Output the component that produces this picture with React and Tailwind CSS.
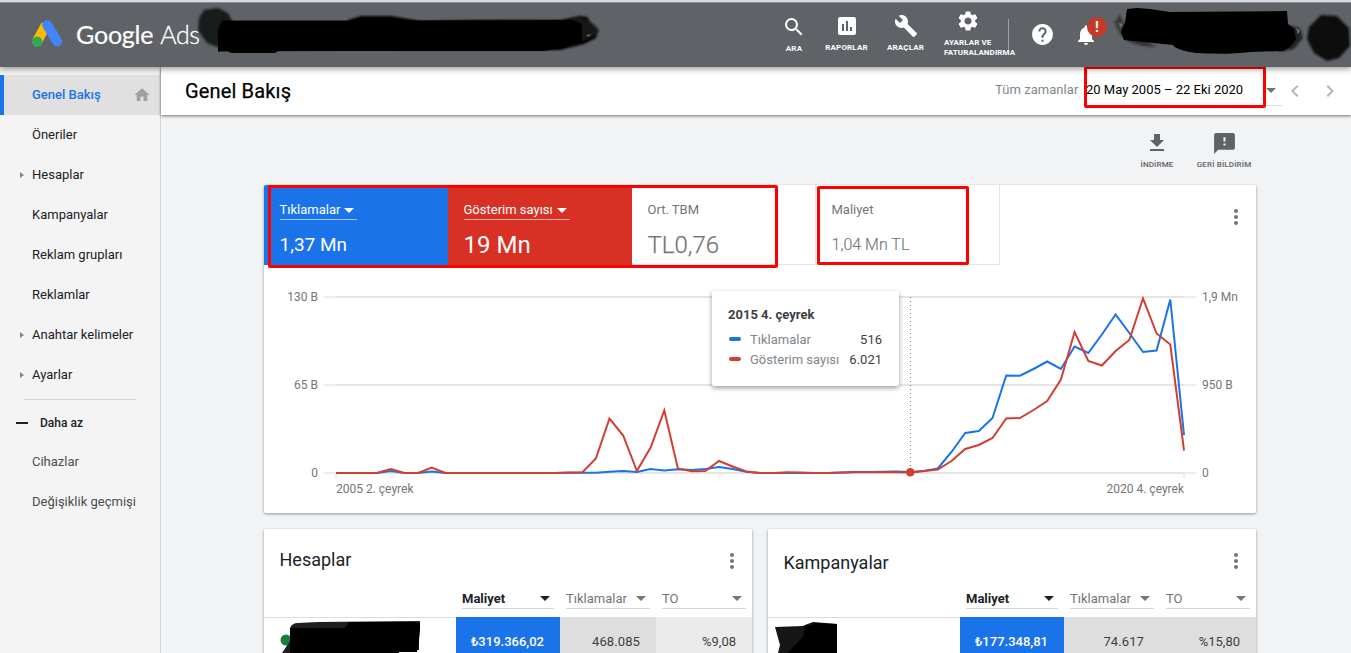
import React from "react";
import {
  MdSearch, MdAssessment, MdBuild, MdSettings, MdHelp, MdNotifications, MdHome,
  MdFileDownload, MdFeedback, MdMoreVert, MdChevronLeft, MdChevronRight,
} from "react-icons/md";

function Caret({ className }) {
  return (
    <svg viewBox="0 0 10 5" className={className} fill="currentColor">
      <path d="M0 0h10L5 5z" />
    </svg>
  );
}

function Logo() {
  return (
    <svg viewBox="0 0 32 30" className="h-[30px] w-8 shrink-0">
      <path d="M14 6 5 22.500" stroke="#fbbc04" strokeWidth="10" />
      <path d="M15.200 6 25.200 22.500" stroke="#4285f4" strokeWidth="10" strokeLinecap="round" />
      <circle cx="5.200" cy="22.800" r="5.200" fill="#34a853" />
    </svg>
  );
}

function NavItem({ icon: Icon, label, className, labelClass }) {
  return (
    <div className={"flex flex-col items-center " + className}>
      <Icon className="size-6 shrink-0" />
      <span className={"whitespace-nowrap text-[8px] font-bold leading-[10px] tracking-[0.15px] " + labelClass}>{label}</span>
    </div>
  );
}

function Header() {
  return (
    <header className="relative z-20 flex h-[67px] shrink-0 border-t-2 border-[#d7dae0] bg-[#5f6368] text-white shadow-[0_2px_6px_rgba(0,0,0,0.4)]">
      <div className="flex w-[773px] items-start border-t border-[#8b8d92] pl-8 pt-4">
        <Logo />
        <div className="ml-3 flex items-baseline gap-[7px] font-[Lato] text-[25px] leading-[30px]">
          <span className="tracking-[-0.2px] [-webkit-text-stroke:0.2px]">Google</span>
          <span className="font-light tracking-[-0.5px] [-webkit-text-stroke:0.3px]">Ads</span>
        </div>
      </div>
      <nav className="flex flex-1 border-t border-[#8b8d92]">
        <NavItem icon={MdSearch} label="ARA" className="ml-px w-10 pt-3" labelClass="mt-[5px]" />
        <NavItem icon={MdAssessment} label="RAPORLAR" className="ml-[3px] w-[59px] pt-[11px]" labelClass="mt-[5px]" />
        <NavItem icon={MdBuild} label="ARAÇLAR" className="ml-px w-[57px] pt-[11px]" labelClass="mt-[5px]" />
        <div className="ml-[10px] flex w-16 flex-col pt-[6px]">
          <MdSettings className="ml-3 size-6" />
          <span className="mt-[5px] whitespace-nowrap text-[8px] font-bold leading-[10px] tracking-[0.1px]">
            AYARLAR VE<br />FATURALANDIRMA
          </span>
        </div>
        <div className="mt-4 h-[34px] w-px bg-white/40" />
        <MdHelp className="ml-[21px] mt-[19px] size-[25px]" />
        <div className="relative ml-[19px] mt-5 size-6">
          <MdNotifications className="size-6" />
          <span className="absolute -top-[6px] left-[13px] flex size-5 items-center justify-center rounded-full bg-[#c53929] text-[14px] font-bold leading-none">!</span>
        </div>
      </nav>
      <svg viewBox="0 0 1351 67" className="absolute -top-0.5 left-0 h-[67px] w-[1351px]">
        <defs>
          <filter id="soft" x="-10%" y="-30%" width="120%" height="160%"><feGaussianBlur stdDeviation="0.800" /></filter>
        </defs>
        <g filter="url(#soft)">
          <path d="M204 10l14-2 10 5 4 8-1 22-11 5-13-5-9-13 1-12z" fill="#191b1c" />
          <path d="M348 20l13-4h30l30 5 60-1h80l18-4 8 1 6 9 5 4-2 8-12 6-24 6H440l-90-1z" fill="#060606" />
          <path d="M577 17q13 2 22 13-1 6-12 9l-18 8V20z" fill="#161616" />
          <path d="M1120 14q-7 10 0 20 10 13 37 13l-30-15z" fill="#303234" />
          <path d="M1114 20q2 16 23 22l-15-21z" fill="#3a3c3e" />
          <path d="M1288 25l12 3 3 10-9 11-15 3z" fill="#222324" />
          <path d="M1309 27l12-12 16 1 12 12 1 18-11 12-12 3-13-8-7-14z" fill="#101110" />
        </g>
        <path d="M222 20.500h200l150-.5 10 4v18l-18 6-20 3H350l-132 .5V30z" fill="#000" />
        <path d="M226 50h54l-5 3h-44z" fill="#000" />
        <path d="M1127 9l10-1 13 1 20 3 117-1 1 13 6 5 2 10-6 8-7 4-33 1q-22 3-54 1-20-3-23-8l-49-5-3-8 4-10z" fill="#000" />
        <path d="M1119 23l4 1-3 4zM1296 28l4 2-2 5zM586 35l6-1-4 3z" fill="#999" opacity="0.6" />
      </svg>
    </header>
  );
}

function SideItem({ label, arrow, muted }) {
  return (
    <li className={"flex h-10 items-center " + (muted ? "text-[#4a4d51]" : "text-[#202124]")}>
      <span className="flex w-8 justify-end pr-2">
        {arrow && (
          <svg viewBox="0 0 4 6" className="h-[6px] w-1 text-[#80868b]"><path d="M0 0l4 3-4 3z" fill="currentColor" /></svg>
        )}
      </span>
      {label}
    </li>
  );
}

function Sidebar() {
  return (
    <aside className="w-[161px] shrink-0 border-r border-[#d2d4d7] bg-[#f4f4f4] pt-2 text-[13px]">
      <ul>
        <li className="flex h-10 items-center border-l-4 border-[#1a73e8] bg-[#e0e0e0] pl-7 pr-[9px] text-[#1a73e8]">
          <span className="font-medium">Genel Bakış</span>
          <MdHome className="ml-auto size-[18px] text-[#9aa0a6]" />
        </li>
        <SideItem label="Öneriler" />
        <SideItem label="Hesaplar" arrow />
        <SideItem label="Kampanyalar" />
        <SideItem label="Reklam grupları" />
        <SideItem label="Reklamlar" />
        <SideItem label="Anahtar kelimeler" arrow />
        <SideItem label="Ayarlar" arrow />
      </ul>
      <div className="mx-6 mt-1 h-px bg-[#d2d2d2]" />
      <div className="mt-[3px] flex h-[39px] items-center pl-4 text-[#202124]">
        <span className="mr-3 h-0.5 w-3 bg-[#202124]" />
        <span className="text-[12px] font-medium">Daha az</span>
      </div>
      <ul>
        <SideItem label="Cihazlar" muted />
        <SideItem label="Değişiklik geçmişi" muted />
      </ul>
    </aside>
  );
}

function TitleBar() {
  return (
    <div className="relative z-10 flex h-12 shrink-0 items-center bg-white pl-6 shadow-[0_1px_3px_rgba(0,0,0,0.55)]">
      <h1 className="text-[20px] tracking-[0.15px] text-black [-webkit-text-stroke:0.25px]">Genel Bakış</h1>
      <div className="ml-auto flex h-full w-[356px] items-start text-[13px]">
        <span className="w-[91px] pt-[14px] leading-[18px] tracking-[0.05px] text-[#80868b]">Tüm zamanlar</span>
        <div className="relative flex h-[39px] w-[196px] border-b border-[#dadce0] pt-[14px]">
          <span className="whitespace-nowrap leading-[18px] text-black">20 May 2005 – 22 Eki 2020</span>
          <Caret className="ml-auto mr-[6px] mt-[7px] h-[5px] w-[10px] text-[#6f7377]" />
          <span className="absolute -left-[2px] -top-[1px] h-[42px] w-[182px] rounded-[2px] border-[3px] border-[#ff0000]" />
        </div>
        <MdChevronLeft className="ml-px mt-3 size-6 text-[#b4b6b8]" />
        <MdChevronRight className="ml-[11px] mt-3 size-6 text-[#b4b6b8]" />
      </div>
    </div>
  );
}

function Actions() {
  return (
    <div className="flex h-[70px] shrink-0 justify-end pr-[95px] text-[#5f6368]">
      <div className="flex w-[52px] flex-col items-center pt-4">
        <MdFileDownload className="size-6" />
        <span className="mt-[5px] text-[8px] font-medium leading-[10px] tracking-[0.15px]">İNDİRME</span>
      </div>
      <div className="ml-[9px] flex w-[64px] flex-col items-center pt-4">
        <MdFeedback className="size-[25px]" />
        <span className="mt-1 whitespace-nowrap text-[8px] font-medium leading-[10px] tracking-[0.15px]">GERİ BİLDİRİM</span>
      </div>
    </div>
  );
}

function Metric({ label, value, className, valueClass, caret }) {
  return (
    <div className={"flex h-20 w-[184px] flex-col items-start pt-4 " + className}>
      <div className={"flex h-[19px] items-center border-b text-[13px] " + (caret ? "border-white/60" : "border-transparent")}>
        <span>{label}</span>
        {caret && <Caret className="ml-1 mr-[3px] h-[5px] w-[10px]" />}
      </div>
      <div className={"mt-[11px] flex h-7 items-center " + valueClass}>{value}</div>
    </div>
  );
}

const X0 = 72;
const STEP = 848 / 62;
const red = [
  473, 473, 473, 473, 469, 473, 473, 467.5, 473, 473, 473, 473, 473, 473, 473, 473, 473, 472.5, 472.5, 458.5, 418.5,
  435.5, 471, 447.5, 410.5, 468.5, 471.2, 471, 461, 466.5, 471.5, 473, 473, 472.3, 472.6, 473, 473, 472.5, 472.2,
  472.2, 472.2, 472.2, 472.5, 471, 469.5, 461, 449, 445, 438, 418.5, 418, 410, 401, 379.5, 332, 361, 365.5, 351, 340,
  298.5, 333.5, 344.5, 450.5,
];
const blue = [
  473, 473, 473, 473, 471, 473, 473, 471.5, 473, 473, 473, 473, 473, 473, 473, 473, 473, 472.7, 472.7, 472.7, 471.8,
  471, 472, 469, 470.5, 469.3, 470, 469, 467, 469, 471.8, 473, 473, 473, 473, 473, 473, 472.5, 472, 472, 471.7,
  471.5, 472, 471, 468.5, 452, 433, 431, 418, 375.5, 375.7, 369, 361.5, 369, 346.5, 353, 334.5, 314.5, 333, 352,
  350.5, 299.5, 435,
];
const points = (ys) => ys.map((y, i) => (X0 + i * STEP).toFixed(1) + "," + (y - 265)).join(" ");

function Chart() {
  return (
    <svg viewBox="0 0 992 248" className="block h-[248px] w-[992px]">
      <g stroke="#e5e5e5" strokeWidth="2">
        <path d="M72 32H920M72 120H920M72 208H920" />
        <path d="M60 32h12M60 120h12M60 208h12M920 32h12M920 120h12M920 208h12M72 208v6M920 208v6" stroke="#eeeeee" />
      </g>
      <path d="M646.500 32V208" stroke="#757575" strokeWidth="1" strokeDasharray="1 3" />
      <g fill="none" strokeWidth="2">
        <polyline points={points(blue)} stroke="#1a73e8" />
        <polyline points={points(red)} stroke="#d23f31" />
      </g>
      <circle cx="646.300" cy="207.300" r="4.300" fill="#d23f31" />
      <g fontSize="12" fill="#757575">
        <text x="54" y="36" textAnchor="end">130 B</text>
        <text x="54" y="124" textAnchor="end">65 B</text>
        <text x="54" y="212" textAnchor="end">0</text>
        <text x="938" y="36">1,9 Mn</text>
        <text x="938" y="124">950 B</text>
        <text x="938" y="212">0</text>
        <text x="72" y="228">2005 2. çeyrek</text>
        <text x="920" y="228" textAnchor="end">2020 4. çeyrek</text>
      </g>
    </svg>
  );
}

function TooltipRow({ color, label, value }) {
  return (
    <div className="flex h-5 items-center">
      <span className={"mb-[3px] ml-px mr-[9px] h-1 w-3 rounded-[2px] " + color} />
      <span className="text-[#80868b]">{label}</span>
      <span className="ml-auto text-[#3c4043]">{value}</span>
    </div>
  );
}

function OverviewCard() {
  return (
    <section className="relative h-[328px] w-[992px] shrink-0 rounded-[2px] bg-white shadow-[0_1px_3px_rgba(0,0,0,0.4)]">
      <div className="flex">
        <Metric label="Tıklamalar" value="1,37 Mn" caret className="rounded-tl-[2px] bg-[#1a73e8] pl-[15.5px] text-white" valueClass="text-[19px]" />
        <Metric label="Gösterim sayısı" value="19 Mn" caret className="bg-[#d93025] pl-[15.5px] text-white" valueClass="text-[24px]" />
        <Metric label="Ort. TBM" value="TL0,76" className="border-b border-r border-[#e4e4e4] pl-[15.5px] text-[#757575]" valueClass="text-[24px] font-light [-webkit-text-stroke:0.25px]" />
        <Metric label="Maliyet" value="1,04 Mn TL" className="border-b border-r border-[#e4e4e4] pl-[15.5px] text-[#757575]" valueClass="text-[16px] font-light [-webkit-text-stroke:0.15px]" />
        <MdMoreVert className="ml-auto mr-2 mt-5 size-6 text-[#757575]" />
      </div>
      <Chart />
      <span className="absolute left-1 top-0 h-[83px] w-[510px] rounded-[2px] border-[3px] border-[#ff0000]" />
      <span className="absolute left-[553px] top-[1px] h-[79px] w-[152px] rounded-[2px] border-[3px] border-[#ff0000]" />
      <div className="absolute left-[448px] top-[106px] h-[95px] w-[187px] rounded-[2px] bg-white pl-4 pr-[17px] pt-[14px] text-[13px] shadow-[0_2px_5px_rgba(0,0,0,0.4)]">
        <div className="mb-[5px] h-5 font-bold leading-5 text-[#3c4043]">2015 4. çeyrek</div>
        <TooltipRow color="bg-[#1a73e8]" label="Tıklamalar" value="516" />
        <TooltipRow color="bg-[#d23f31]" label="Gösterim sayısı" value="6.021" />
      </div>
    </section>
  );
}

function Column({ label, className }) {
  return (
    <div className={"flex h-5 items-center border-b border-[#d5d5d5] text-[13px] " + className}>
      {label}
      <Caret className="ml-auto mr-[4.5px] h-[5px] w-[10px]" />
    </div>
  );
}

function TableCard({ title, titleClass, values, children }) {
  return (
    <section className="relative flex h-[180px] w-[488px] flex-col rounded-[2px] bg-white shadow-[0_1px_3px_rgba(0,0,0,0.4)]">
      <div className="flex h-[60px] justify-between pl-[15.5px] pr-2 pt-5">
        <h2 className={"text-[18px] leading-6 text-[#202124] " + titleClass}>{title}</h2>
        <MdMoreVert className="size-6 text-[#757575]" />
      </div>
      <div className="flex h-[29px] justify-end gap-3 border-b border-[#dadce0] pr-[6px]">
        <Column label="Maliyet" className="w-[92px] font-bold text-[#202124]" />
        <Column label="Tıklamalar" className="w-[84px] text-[#757575]" />
        <Column label="TO" className="w-[84px] text-[#757575]" />
      </div>
      <div className="-mt-px flex flex-1 justify-end text-[13px] text-[#3c4043]">
        <div className="w-[104px] bg-[#1a73e8] pr-4 pt-4 text-right font-medium leading-[18px] text-white">{values[0]}</div>
        <div className="w-24 bg-[#dedede] pr-4 pt-4 text-right leading-[18px] tracking-[0.1px]">{values[1]}</div>
        <div className={"w-24 pr-4 pt-4 text-right leading-[18px] " + values[3]}>{values[2]}</div>
      </div>
      {children}
    </section>
  );
}

export default function App() {
  return (
    <div className="flex h-[653px] w-[1351px] flex-col overflow-hidden bg-[#f1f3f4] font-[Roboto,sans-serif]">
      <Header />
      <div className="flex min-h-0 flex-1">
        <Sidebar />
        <main className="flex min-w-0 flex-1 flex-col">
          <TitleBar />
          <Actions />
          <div className="flex shrink-0 flex-col gap-4 pl-[103px]">
            <OverviewCard />
            <div className="flex gap-4">
              <TableCard title="Hesaplar" titleClass="-mt-px" values={["₺319.366,02", "468.085", "%9,08", "bg-[#ebebeb]"]}>
                <svg viewBox="0 0 170 40" className="absolute left-0 top-[88px] h-10 w-[170px]">
                  <circle cx="22" cy="23" r="5.500" fill="#188038" />
                  <path d="M18 36l8-12V11q2-5 8-5l20-1 102-1v5l-1 10v14h-20v6H20z" fill="#1f1f1f" />
                  <path d="M26 11h55l4-6h67v1h4v5l-1 13-2 11h-18l-1 5H26z" fill="#000" />
                </svg>
              </TableCard>
              <TableCard title="Kampanyalar" titleClass="mt-[2px]" values={["₺177.348,81", "74.617", "%15,80", "bg-[#dedede]"]}>
                <svg viewBox="0 0 80 40" className="absolute left-0 top-[88px] h-10 w-20">
                  <path d="M7 10l28-1 2-1 8-3 24 2v33H9l3-12z" fill="#161616" />
                  <path d="M45 6l24 1v33H15l20-20 2-11 8-1z" fill="#000" />
                </svg>
              </TableCard>
            </div>
          </div>
        </main>
      </div>
    </div>
  );
}
